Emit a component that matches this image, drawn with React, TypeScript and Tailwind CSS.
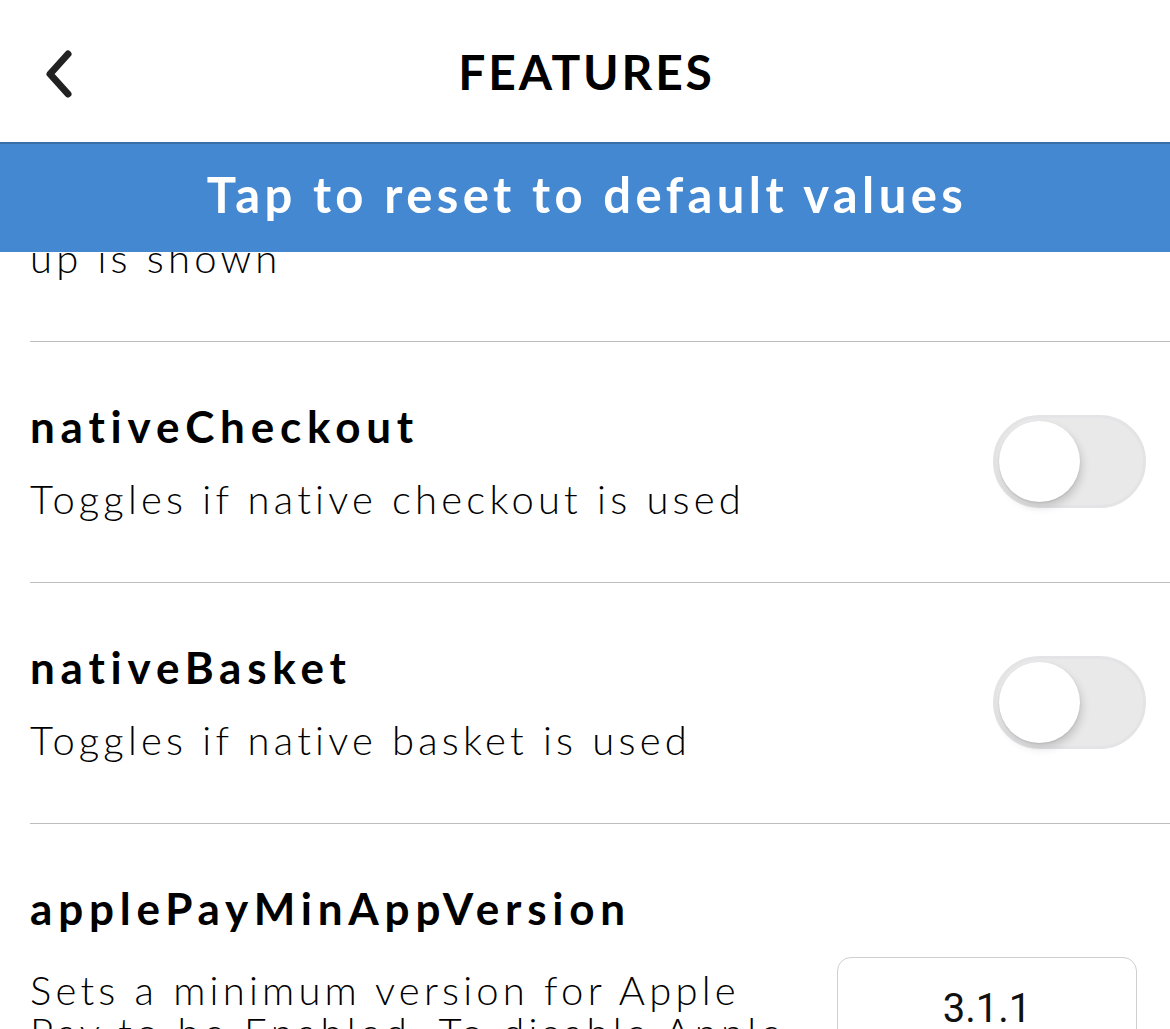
import React from "react";

type Flag = {
  name: string;
  text: string;
};

const flags: Flag[] = [
  { name: "nativeCheckout", text: "Toggles if native checkout is used" },
  { name: "nativeBasket", text: "Toggles if native basket is used" },
];

function BackArrow() {
  return (
    <svg width="40" height="56" viewBox="0 0 40 56" fill="none">
      <path
        d="M27 7 L9 27 L27 47"
        stroke="#222"
        strokeWidth="7"
        strokeLinecap="round"
        strokeLinejoin="round"
      />
    </svg>
  );
}

function Switch() {
  return (
    <div className="w-[153px] h-[93px] rounded-full bg-[#e9e9ea] border-[3px] border-[#e4e4e6] flex items-center px-[3px] shrink-0">
      <div className="w-[81px] h-[81px] rounded-full bg-white shadow-[2px_5px_9px_rgba(0,0,0,0.16),0_1px_2px_rgba(0,0,0,0.1)]" />
    </div>
  );
}

export default function App() {
  return (
    <div className="w-[1170px] h-[1029px] bg-white overflow-hidden flex flex-col font-['Lato',sans-serif] text-black">
      <header className="h-[142px] shrink-0 relative flex items-center justify-center bg-white">
        <div className="absolute left-[41px] top-[47px]">
          <BackArrow />
        </div>
        <h1 className="text-[48px] font-bold tracking-[2.8px] leading-none pt-[2px] pl-[3px]">FEATURES</h1>
      </header>

      <div className="relative z-10 h-[110px] shrink-0 bg-[#4488d1] border-t-[2px] border-[#3a6ea8] flex items-center justify-center">
        <span className="text-white text-[49px] font-bold tracking-[4.4px] leading-none -mt-[8px] pl-[4px]">
          Tap to reset to default values
        </span>
      </div>

      <div className="flex-1 overflow-hidden">
        <div className="-mt-[15px] pl-[30px] pb-[62px] text-[40px] leading-[42px] font-light tracking-[4.2px]">
          up is shown
        </div>

        {flags.map((f) => (
          <div key={f.name} className="ml-[30px] border-t border-[#bdbdbd] pt-[60px] pb-[62px] pr-[24px] flex items-center justify-between">
            <div>
              <div className="text-[44px] leading-[48px] font-bold tracking-[5.8px]">{f.name}</div>
              <div className="mt-[28px] text-[40px] leading-[42px] font-light tracking-[4.2px]">{f.text}</div>
            </div>
            <Switch />
          </div>
        ))}

        <div className="ml-[30px] border-t border-[#bdbdbd] pt-[60px] pr-[33px]">
          <div className="text-[44px] leading-[48px] font-bold tracking-[5.8px]">applePayMinAppVersion</div>
          <div className="mt-[25px] flex items-start">
            <div className="w-[775px] pt-[12px] text-[40px] leading-[42px] font-light tracking-[4.2px]">
              Sets a minimum version for Apple Pay to be Enabled. To disable Apple Pay set a high version number
            </div>
            <div className="ml-auto w-[300px] h-[104px] shrink-0 rounded-[14px] border border-[#cfcfcf] flex items-center justify-center font-['Roboto',sans-serif] text-[40px] text-[#111]">
              3.1.1
            </div>
          </div>
        </div>
      </div>
    </div>
  );
}
